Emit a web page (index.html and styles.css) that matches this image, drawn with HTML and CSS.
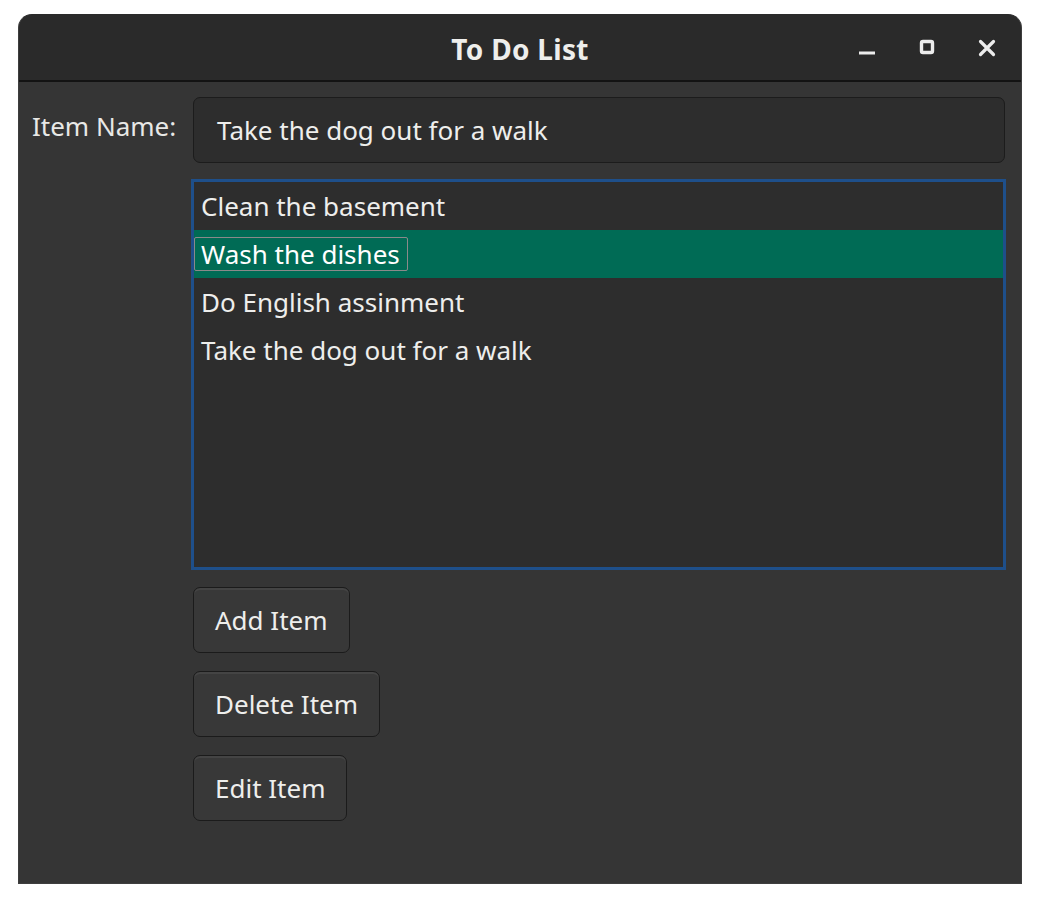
FILE: index.html
```html
<!DOCTYPE html>
<html>
<head>
<meta charset="utf-8">
<link rel="stylesheet" href="styles.css">
</head>
<body>
<div class="window">
  <header class="titlebar">
    <div class="title">To Do List</div>
    <div class="controls">
      <span class="ctl"><svg width="18" height="18" viewBox="0 0 18 18"><rect x="1" y="12.5" width="16" height="3" fill="#ececec"/></svg></span>
      <span class="ctl"><svg width="18" height="18" viewBox="0 0 18 18"><rect x="3.5" y="2.5" width="11" height="11" rx="1.5" fill="none" stroke="#ececec" stroke-width="3.4"/></svg></span>
      <span class="ctl"><svg width="18" height="18" viewBox="0 0 18 18"><path d="M2.5 2.5 L15.5 15.5 M15.5 2.5 L2.5 15.5" stroke="#ececec" stroke-width="3.2" stroke-linecap="round"/></svg></span>
    </div>
  </header>
  <main class="content">
    <label class="label">Item Name:</label>
    <div class="entry">Take the dog out for a walk</div>
    <div class="spacer"></div>
    <div class="list">
      <div class="row"><span class="item">Clean the basement</span></div>
      <div class="row selected"><span class="item focus">Wash the dishes</span></div>
      <div class="row"><span class="item">Do English assinment</span></div>
      <div class="row"><span class="item">Take the dog out for a walk</span></div>
    </div>
    <div class="spacer"></div>
    <div class="buttons">
      <button class="btn">Add Item</button>
      <button class="btn">Delete Item</button>
      <button class="btn">Edit Item</button>
    </div>
  </main>
</div>
</body>
</html>
```

FILE: styles.css
```css
html, body {
  margin: 0;
  padding: 0;
  background: #ffffff;
}
body {
  font-family: "Noto Sans", "Open Sans", sans-serif;
  color: #eeeeec;
}
.window {
  margin: 14px 0 0 18px;
  width: 1004px;
  height: 870px;
  box-sizing: border-box;
  background: #353535;
  border-radius: 14px 14px 0 0;
  border: 1px solid #3e3e3e;
  border-top-color: #2a2a2a;
  overflow: hidden;
  display: flex;
  flex-direction: column;
}
.titlebar {
  height: 65px;
  flex: none;
  background: #2a2a2a;
  border-bottom: 2px solid #131313;
  position: relative;
  display: flex;
  align-items: center;
  justify-content: center;
}
.title {
  font-size: 28px;
  font-weight: bold;
  letter-spacing: 0.3px;
  color: #eeeeec;
  margin-top: 2px;
}
.controls {
  position: absolute;
  right: 25px;
  top: 0;
  height: 65px;
  display: flex;
  align-items: center;
  gap: 42px;
}
.ctl {
  width: 18px;
  height: 18px;
  display: flex;
}
.content {
  flex: 1;
  padding: 15px 15px 0 13px;
  display: grid;
  grid-template-columns: 159px 1fr;
  grid-auto-rows: min-content;
  row-gap: 16px;
  align-content: start;
}
.label {
  font-size: 26px;
  line-height: 58px;
  color: #e8e8e6;
  white-space: nowrap;
}
.entry {
  height: 66px;
  box-sizing: border-box;
  margin-left: 2px;
  margin-right: 1px;
  border: 1px solid #1c1c1c;
  border-radius: 7px;
  background: #2d2d2d;
  font-size: 26px;
  line-height: 64px;
  padding-left: 23px;
  color: #eeeeec;
}
.list {
  height: 391px;
  box-sizing: border-box;
  border: 3px solid #1e4f8a;
  background: #2d2d2d;
  display: flex;
  flex-direction: column;
}
.row {
  height: 48px;
  flex: none;
  display: flex;
  align-items: center;
}
.row.selected {
  background: #006b55;
}
.item {
  font-size: 26px;
  line-height: 32px;
  padding: 0 7px 0 6px;
  border: 1px solid transparent;
  border-radius: 2px;
  color: #eeeeec;
  margin-top: -1px;
}
.item.focus {
  border-color: #8a8a8a;
  color: #ffffff;
}
.buttons {
  display: flex;
  flex-direction: column;
  align-items: flex-start;
  gap: 18px;
  margin-top: 1px;
  margin-left: 2px;
}
.btn {
  font-family: "Noto Sans", "Open Sans", sans-serif;
  font-size: 26px;
  height: 66px;
  padding: 0 21px;
  border: 1px solid #1b1b1b;
  border-radius: 7px;
  background: #383838;
  box-shadow: inset 0 2px 0 #444444;
  color: #eeeeec;
  line-height: 1;
}
```
